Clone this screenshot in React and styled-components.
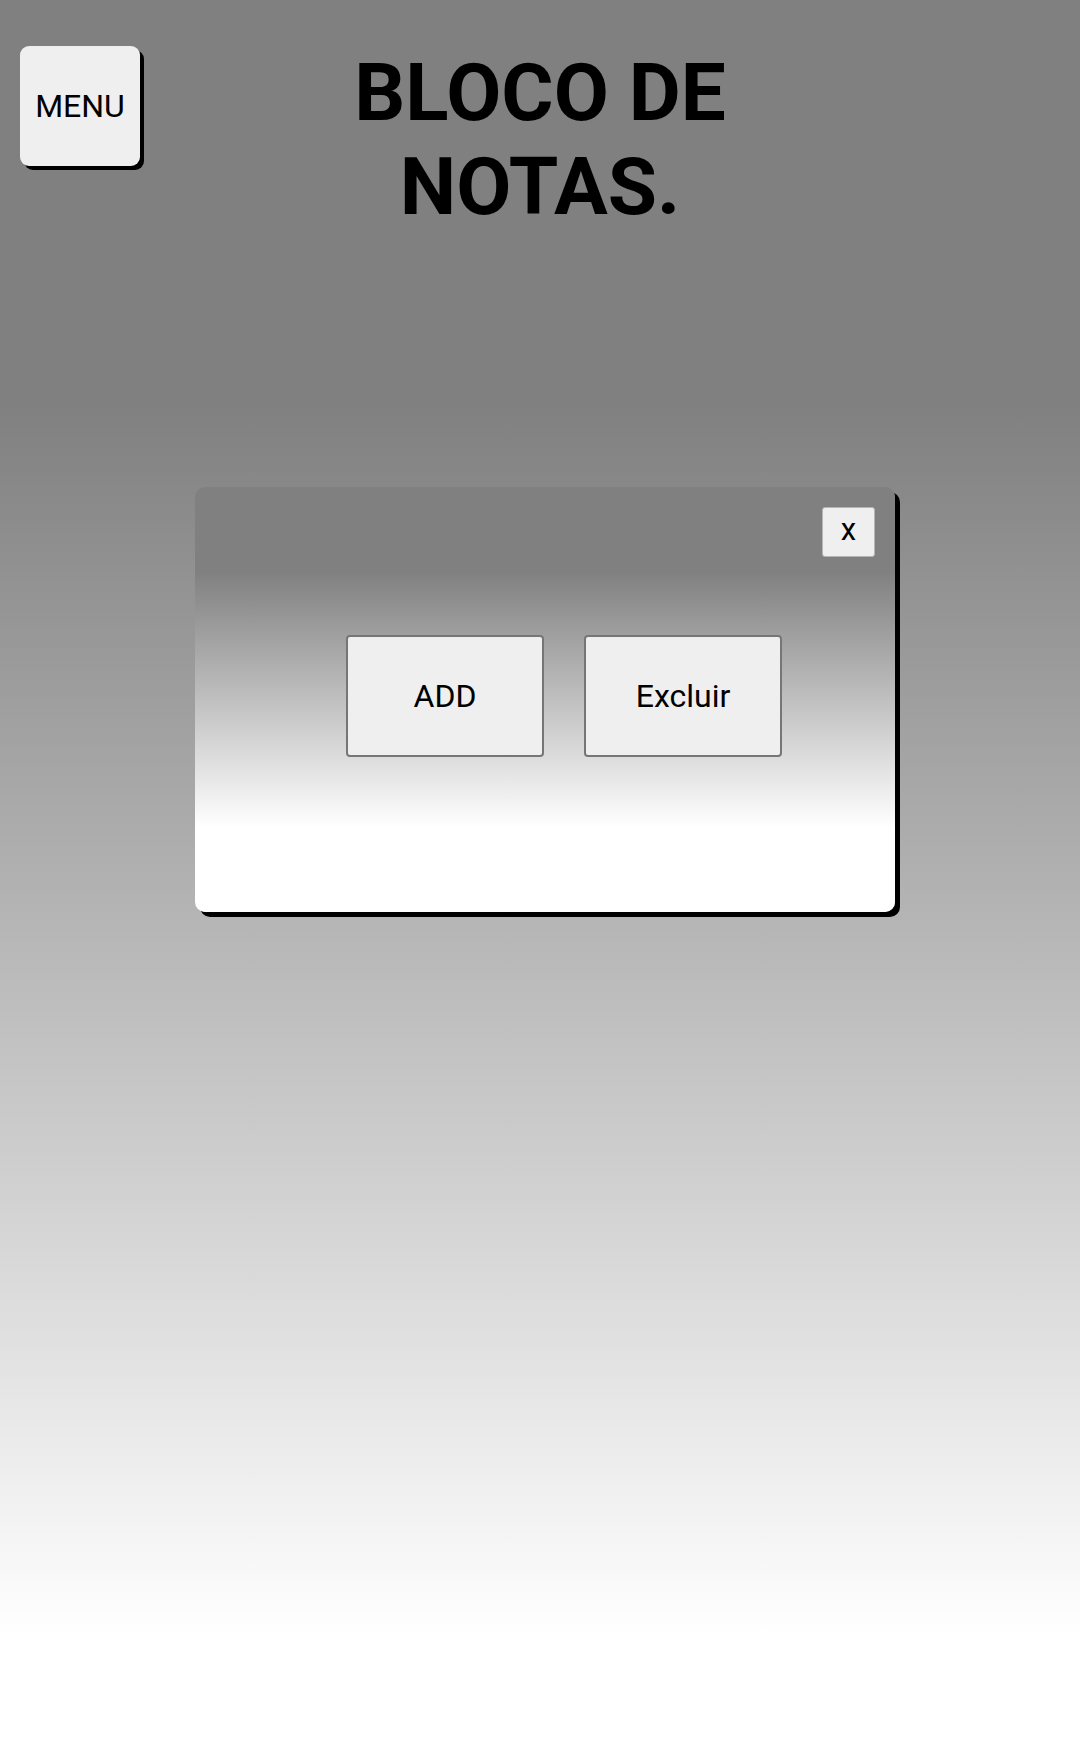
import React from "react";
import styled, { createGlobalStyle } from "styled-components";

const GlobalStyle = createGlobalStyle`
  html, body {
    margin: 0;
    padding: 0;
  }
  body {
    font-family: Roboto, "Liberation Sans", Arial, sans-serif;
    color: #000;
  }
  * { box-sizing: border-box; }
`;

const Page = styled.div`
  min-height: 1761px;
  background: linear-gradient(to bottom, #808080 23%, #ffffff 93%);
  padding-top: 46px;
  display: flex;
  flex-direction: column;
`;

const Header = styled.header`
  display: grid;
  grid-template-columns: 120px 1fr 120px;
  align-items: start;
  padding: 0 20px;
`;

const MenuButton = styled.button`
  width: 120px;
  height: 120px;
  background: #efefef;
  border: none;
  border-radius: 9px;
  box-shadow: 4px 4px 0 #000;
  font-family: Roboto, "Liberation Sans", Arial, sans-serif;
  font-size: 32px;
  color: #000;
  padding: 0;
  cursor: pointer;
`;

const Title = styled.h1`
  justify-self: center;
  max-width: 420px;
  margin: 0;
  text-align: center;
  font-size: 80px;
  font-weight: 700;
  line-height: normal;
  font-family: Roboto, "Liberation Sans", Arial, sans-serif;
`;

const Modal = styled.div`
  margin: 253px 0 0 195px;
  width: 700px;
  height: 425px;
  border-radius: 10px;
  background: linear-gradient(to bottom, #808080 20%, #ffffff 80%);
  box-shadow: 5px 5px 0 #000;
  padding: 20px;
  display: flex;
  flex-direction: column;
`;

const CloseButton = styled.button`
  align-self: flex-end;
  width: 53px;
  height: 50px;
  background: #efefef;
  border: 1px solid #b5b5b5;
  border-radius: 3px;
  font-family: Roboto, "Liberation Sans", Arial, sans-serif;
  font-size: 31px;
  line-height: 1;
  padding: 0 0 6px;
  color: #000;
  cursor: pointer;
`;

const ButtonRow = styled.div`
  margin-top: 78px;
  padding-left: 38px;
  display: flex;
  justify-content: center;
  gap: 40px;
`;

const ActionButton = styled.button`
  width: 198px;
  height: 122px;
  background: #efefef;
  border: 2px solid #767676;
  border-radius: 4px;
  font-family: Roboto, "Liberation Sans", Arial, sans-serif;
  font-size: 32px;
  color: #000;
  cursor: pointer;
`;

export default function App() {
  return (
    <>
      <GlobalStyle />
      <Page>
        <Header>
          <MenuButton>MENU</MenuButton>
          <Title>BLOCO DE NOTAS.</Title>
          <span />
        </Header>
        <Modal>
          <CloseButton>x</CloseButton>
          <ButtonRow>
            <ActionButton>ADD</ActionButton>
            <ActionButton>Excluir</ActionButton>
          </ButtonRow>
        </Modal>
      </Page>
    </>
  );
}
